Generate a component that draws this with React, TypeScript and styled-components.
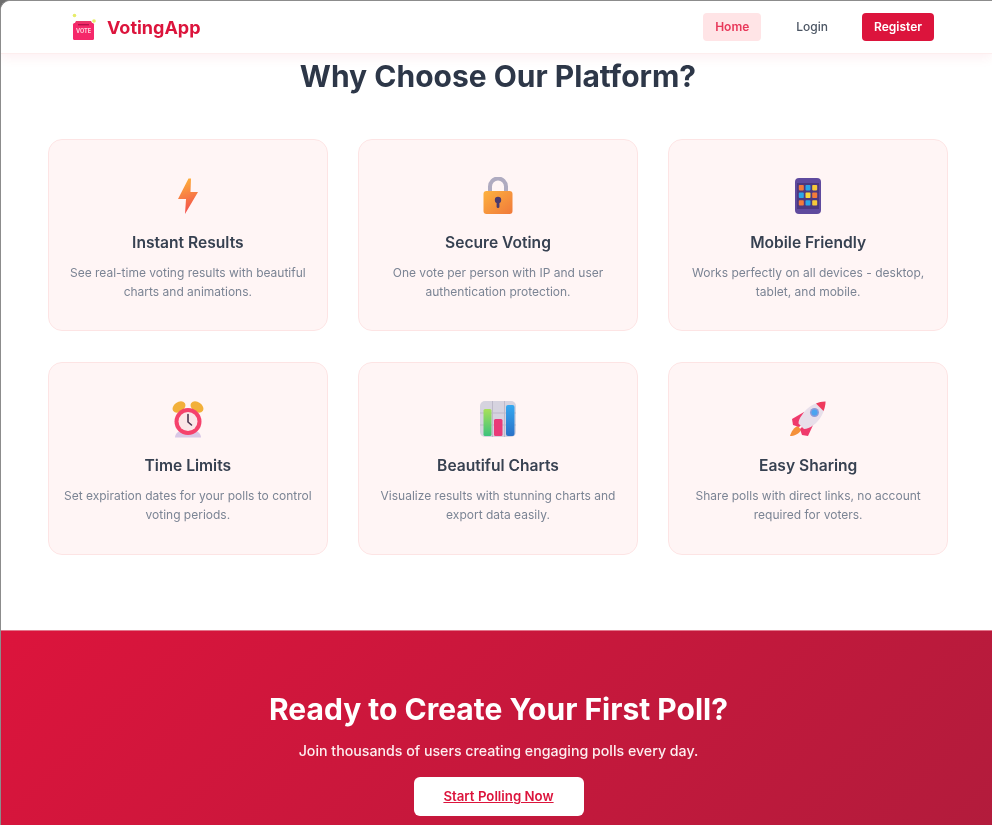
import React from "react";
import styled, { createGlobalStyle } from "styled-components";

const Global = createGlobalStyle`
  html, body { margin: 0; padding: 0; background: #6f6f6f; }
  body { font-family: Inter, "Liberation Sans", sans-serif; }
  * { box-sizing: border-box; }
`;

const Frame = styled.div`
  width: 992px;
  height: 825px;
  overflow: hidden;
  background: #fff;
  border-top: 1px solid #8c8c8c;
  border-left: 1px solid #8c8c8c;
  border-top-left-radius: 10px;
  display: flex;
  flex-direction: column;
  filter: blur(0.5px);
`;

const Header = styled.header`
  height: 53px;
  flex: none;
  display: flex;
  align-items: center;
  justify-content: space-between;
  padding: 0 58px 0 70px;
  background: #fff;
  border-bottom: 1px solid #fdeeee;
  box-shadow: 0 3px 12px rgba(220, 20, 60, 0.07);
  position: relative;
  z-index: 2;
`;

const Brand = styled.div`
  display: flex;
  align-items: center;
  gap: 10px;
`;

const BrandName = styled.span`
  font-size: 18px;
  font-weight: 700;
  color: #dc143c;
`;

const Nav = styled.nav`
  display: flex;
  align-items: center;
`;

const NavLink = styled.a<{ $variant?: "active" | "primary" }>`
  display: block;
  height: 28px;
  line-height: 28px;
  border-radius: 4px;
  font-size: 12px;
  font-weight: ${(p) => (p.$variant ? 600 : 500)};
  padding: 0 12px;
  margin-left: ${(p) => (p.$variant === "primary" ? 22 : 0)}px;
  color: ${(p) =>
    p.$variant === "active" ? "#e8385a" : p.$variant === "primary" ? "#fff" : "#4b5563"};
  background: ${(p) =>
    p.$variant === "active" ? "#ffe4e6" : p.$variant === "primary" ? "#dc143c" : "transparent"};
  &:nth-child(2) { margin-left: 23px; }
`;

const Features = styled.main`
  flex: 1;
  padding: 4px 44px 0 47px;
`;

const Title = styled.h2`
  margin: 0 0 44px;
  height: 37px;
  line-height: 37px;
  text-align: center;
  font-size: 30px;
  font-weight: 700;
  color: #2d3748;
`;

const Grid = styled.div`
  display: grid;
  grid-template-columns: repeat(3, 1fr);
  grid-template-rows: 192px 193px;
  gap: 31px 30.5px;
`;

const Card = styled.article`
  background: #fff5f5;
  border: 1px solid #fde4e4;
  border-radius: 14px;
  padding: 36px 14px 0;
  text-align: center;
`;

const IconSlot = styled.div`
  height: 40px;
  display: flex;
  justify-content: center;
  align-items: center;
`;

const CardTitle = styled.h3`
  margin: 16px 0 0;
  font-size: 15.6px;
  line-height: 22px;
  font-weight: 600;
  color: #374151;
`;

const CardText = styled.p`
  margin: 9px 0 0;
  font-size: 12px;
  line-height: 19.2px;
  color: #7b8494;
`;

const Cta = styled.section`
  height: 195px;
  flex: none;
  padding: 60px 0 0 4px;
  border-top: 1px solid #e2768b;
  background: linear-gradient(135deg, #dc143c 0%, #b01c3c 100%) no-repeat;
  background-size: 100% 270px;
  display: flex;
  flex-direction: column;
  align-items: center;
  color: #fff;
`;

const CtaTitle = styled.h2`
  margin: 0;
  font-size: 30px;
  line-height: 36px;
  font-weight: 700;
`;

const CtaText = styled.p`
  margin: 13px 0 0;
  font-size: 14.2px;
  line-height: 22px;
  font-weight: 500;
  color: #fdeef0;
`;

const CtaButton = styled.a`
  margin-top: 15px;
  width: 170px;
  height: 39px;
  line-height: 39px;
  text-align: center;
  background: #fff;
  border-radius: 6px;
  color: #dc143c;
  font-size: 13.25px;
  font-weight: 600;
  text-decoration: underline;
`;

const LogoIcon = () => (
  <svg width="26" height="28" viewBox="0 0 26 28">
    <circle cx="3.5" cy="2.5" r="1.8" fill="#e6ec6a" />
    <circle cx="23" cy="8" r="1.8" fill="#e6ec6a" />
    <path d="M5 8h15l2 3.500H3z" fill="#e8386a" />
    <rect x="2" y="10" width="21" height="17" rx="1.5" fill="#f5286a" />
    <rect x="7" y="11" width="11" height="1.4" fill="#b5124a" />
    <text x="12.500" y="20" fontSize="5.5" fontWeight="700" textAnchor="middle" fill="#ffd9e2" fontFamily="Inter, sans-serif">VOTE</text>
  </svg>
);

const Bolt = () => (
  <svg width="24" height="38" viewBox="0 0 24 38">
    <defs>
      <linearGradient id="bolt" x1="0.4" y1="0" x2="0.6" y2="1">
        <stop offset="0" stopColor="#fdb03a" />
        <stop offset="1" stopColor="#f2484e" />
      </linearGradient>
    </defs>
    <path d="M12.500 1.500h2.500L14.500 15H22L9 37l1-15H2z" fill="url(#bolt)" />
  </svg>
);

const Lock = () => (
  <svg width="32" height="38" viewBox="0 0 32 38">
    <defs>
      <linearGradient id="lockb" x1="0" y1="0" x2="1" y2="1">
        <stop offset="0" stopColor="#fdb23f" />
        <stop offset="1" stopColor="#f0793a" />
      </linearGradient>
    </defs>
    <path d="M8 16V9.500a8 8 0 0 1 16 0V16" fill="none" stroke="#afabc0" strokeWidth="4" />
    <rect x="1.500" y="14" width="29" height="23" rx="3" fill="url(#lockb)" />
    <circle cx="16" cy="23" r="3.200" fill="#4a3a6e" />
    <rect x="14.600" y="23" width="2.800" height="8" rx="1.300" fill="#4a3a6e" />
  </svg>
);

const gridColors = ["#f47b3a", "#2aa6e8", "#f7c93a", "#2aa6e8", "#f7d63a", "#f47b3a", "#f47b3a", "#2aa6e8", "#f7c93a"];

const Phone = () => (
  <svg width="28" height="38" viewBox="0 0 28 38">
    <rect x="1" y="1" width="26" height="36" rx="4" fill="#5f4a9e" />
    <rect x="3" y="6" width="22" height="26" fill="#4c3880" />
    {gridColors.map((c, i) => (
      <rect key={i} x={4.8 + (i % 3) * 6.7} y={8 + Math.floor(i / 3) * 7.6} width="5" height="5.4" rx="0.8" fill={c} />
    ))}
  </svg>
);

const Clock = () => (
  <svg width="34" height="38" viewBox="0 0 34 38">
    <ellipse cx="8" cy="7" rx="7" ry="5" transform="rotate(-35 8 7)" fill="#f2b03a" />
    <ellipse cx="26" cy="7" rx="7" ry="5" transform="rotate(35 26 7)" fill="#f2b03a" />
    <path d="M4 37.500c0-5 5-8 13-8s13 3 13 8z" fill="#d9c8e6" />
    <circle cx="17" cy="21.500" r="13.500" fill="#f5426c" />
    <circle cx="17" cy="21.500" r="9.500" fill="#fbe6e8" />
    <path d="M17 14.500v7.500l3.500 3" fill="none" stroke="#4a3550" strokeWidth="1.6" strokeLinecap="round" />
  </svg>
);

const Chart = () => (
  <svg width="38" height="38" viewBox="0 0 38 38">
    <defs>
      <linearGradient id="barG" x1="0" y1="0" x2="0" y2="1">
        <stop offset="0" stopColor="#a8e05a" />
        <stop offset="1" stopColor="#3cc27c" />
      </linearGradient>
      <linearGradient id="barB" x1="0" y1="0" x2="0" y2="1">
        <stop offset="0" stopColor="#35a8f0" />
        <stop offset="1" stopColor="#2a72c8" />
      </linearGradient>
    </defs>
    <rect x="1" y="1" width="36" height="36" rx="5" fill="#d6d3df" />
    <path d="M13.500 1v36M25.500 1v36M1 13h36M1 25h36" stroke="#bdb9c9" strokeWidth="1" />
    <rect x="4.500" y="9" width="8" height="27" rx="1.500" fill="url(#barG)" />
    <rect x="15" y="19" width="8.500" height="17" rx="1.500" fill="#e93a78" />
    <rect x="27" y="5" width="8.500" height="31" rx="2" fill="url(#barB)" />
  </svg>
);

const Rocket = () => (
  <svg width="38" height="38" viewBox="0 0 38 38">
    <path d="M9 26c-4 1-7 6-8 10 4 0 9-2 11-6z" fill="#f5913a" />
    <path d="M15 12 3 19l1 6 6 2 5-4z" fill="#ef3a6c" />
    <path d="M25 23 19 36l-6-1-2-6 4-4z" fill="#ef3a6c" />
    <path d="M36.500 1.500C27 1.500 18 7 13 15c-2.500 3-3.500 6-3.500 8.500l5.500 5.500c3 0 6-1.500 9-3.500C31 20.500 36.500 11 36.500 1.500z" fill="#e8dfea" />
    <path d="M36.500 1.500c-3.500 0-7 .7-9.500 2l7.500 7.500c1.200-3 2-6 2-9.500z" fill="#ef3a5c" />
    <circle cx="25.500" cy="12.500" r="4.500" fill="#8d9bd8" />
    <circle cx="25.500" cy="12.500" r="3" fill="#4aa4f0" />
  </svg>
);

const features = [
  { icon: <Bolt />, title: "Instant Results", text: "See real-time voting results with beautiful charts and animations." },
  { icon: <Lock />, title: "Secure Voting", text: "One vote per person with IP and user authentication protection." },
  { icon: <Phone />, title: "Mobile Friendly", text: "Works perfectly on all devices - desktop, tablet, and mobile." },
  { icon: <Clock />, title: "Time Limits", text: "Set expiration dates for your polls to control voting periods." },
  { icon: <Chart />, title: "Beautiful Charts", text: "Visualize results with stunning charts and export data easily." },
  { icon: <Rocket />, title: "Easy Sharing", text: "Share polls with direct links, no account required for voters." },
];

export default function App() {
  return (
    <>
      <Global />
      <Frame>
        <Header>
          <Brand>
            <LogoIcon />
            <BrandName>VotingApp</BrandName>
          </Brand>
          <Nav>
            <NavLink $variant="active">Home</NavLink>
            <NavLink>Login</NavLink>
            <NavLink $variant="primary">Register</NavLink>
          </Nav>
        </Header>
        <Features>
          <Title>Why Choose Our Platform?</Title>
          <Grid>
            {features.map((f) => (
              <Card key={f.title}>
                <IconSlot>{f.icon}</IconSlot>
                <CardTitle>{f.title}</CardTitle>
                <CardText>{f.text}</CardText>
              </Card>
            ))}
          </Grid>
        </Features>
        <Cta>
          <CtaTitle>Ready to Create Your First Poll?</CtaTitle>
          <CtaText>Join thousands of users creating engaging polls every day.</CtaText>
          <CtaButton>Start Polling Now</CtaButton>
        </Cta>
      </Frame>
    </>
  );
}
